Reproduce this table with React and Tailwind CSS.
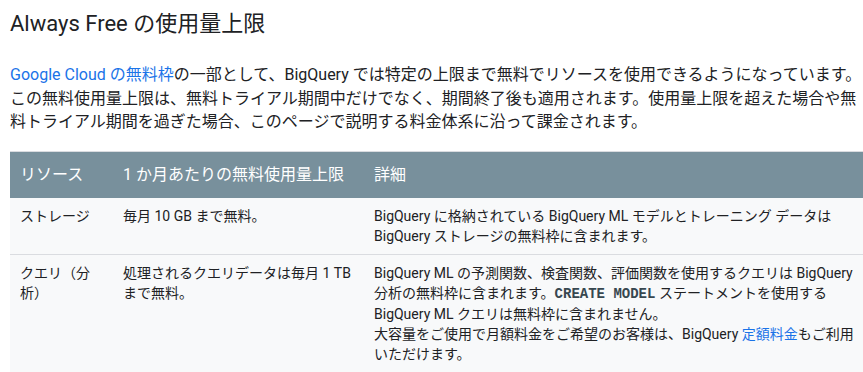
const rows = [
  {
    resource: "ストレージ",
    limit: "毎月 10 GB まで無料。",
    detail: (
      <>
        BigQuery に格納されている BigQuery ML モデルとトレーニング データは
        <br />
        BigQuery ストレージの無料枠に含まれます。
      </>
    ),
  },
  {
    resource: (
      <>
        クエリ（分
        <br />
        析）
      </>
    ),
    limit: (
      <>
        処理されるクエリデータは毎月 1 TB
        <br />
        まで無料。
      </>
    ),
    detail: (
      <>
        BigQuery ML の予測関数、検査関数、評価関数を使用するクエリは BigQuery
        <br />
        分析の無料枠に含まれます。
        <code className="font-['Liberation_Mono',monospace] font-bold text-[14px] text-[#37474f]">
          CREATE MODEL
        </code>{" "}
        ステートメントを使用する
        <br />
        BigQuery ML クエリは無料枠に含まれません。
        <br />
        大容量をご使用で月額料金をご希望のお客様は、BigQuery{" "}
        <a href="#" className="text-[#1a73e8]">
          定額料金
        </a>
        もご利用
        <br />
        いただけます。
      </>
    ),
  },
];

const App = () => {
  return (
    <div className="w-[863px] h-[372px] overflow-hidden bg-white font-['Roboto','Noto_Sans_CJK_JP',sans-serif] text-[#202124] pl-[10px]">
      <h2 className="pt-[8px] text-[22px] leading-[32px] font-normal whitespace-nowrap">
        Always Free の使用量上限
      </h2>

      <p className="mt-[23px] text-[16px] leading-[23.5px] whitespace-nowrap">
        <a href="#" className="text-[#1a73e8]">
          Google Cloud の無料枠
        </a>
        の一部として、BigQuery では特定の上限まで無料でリソースを使用できるようになっています。
        <br />
        この無料使用量上限は、無料トライアル期間中だけでなく、期間終了後も適用されます。使用量上限を超えた場合や無
        <br />
        料トライアル期間を過ぎた場合、このページで説明する料金体系に沿って課金されます。
      </p>

      <table className="mt-[17px] w-[863px] table-fixed border-collapse border-t border-[#dadce0]">
        <thead>
          <tr className="bg-[#78909c] text-white text-[16px] text-left">
            <th className="w-[103px] pl-[10px] h-[47px] font-normal">リソース</th>
            <th className="w-[251px] pl-[10px] font-normal">1 か月あたりの無料使用量上限</th>
            <th className="pl-[10px] font-normal">詳細</th>
          </tr>
        </thead>
        <tbody>
          {rows.map((row, i) => (
            <tr key={i} className="bg-[#f8f9fa] border-b border-[#dadce0] text-[14px] leading-[20px] align-top">
              <td className="pl-[10px] py-[8px] whitespace-nowrap">{row.resource}</td>
              <td className="pl-[10px] py-[8px] whitespace-nowrap">{row.limit}</td>
              <td className="pl-[10px] py-[8px] whitespace-nowrap">{row.detail}</td>
            </tr>
          ))}
        </tbody>
      </table>
    </div>
  );
};

export default App;
